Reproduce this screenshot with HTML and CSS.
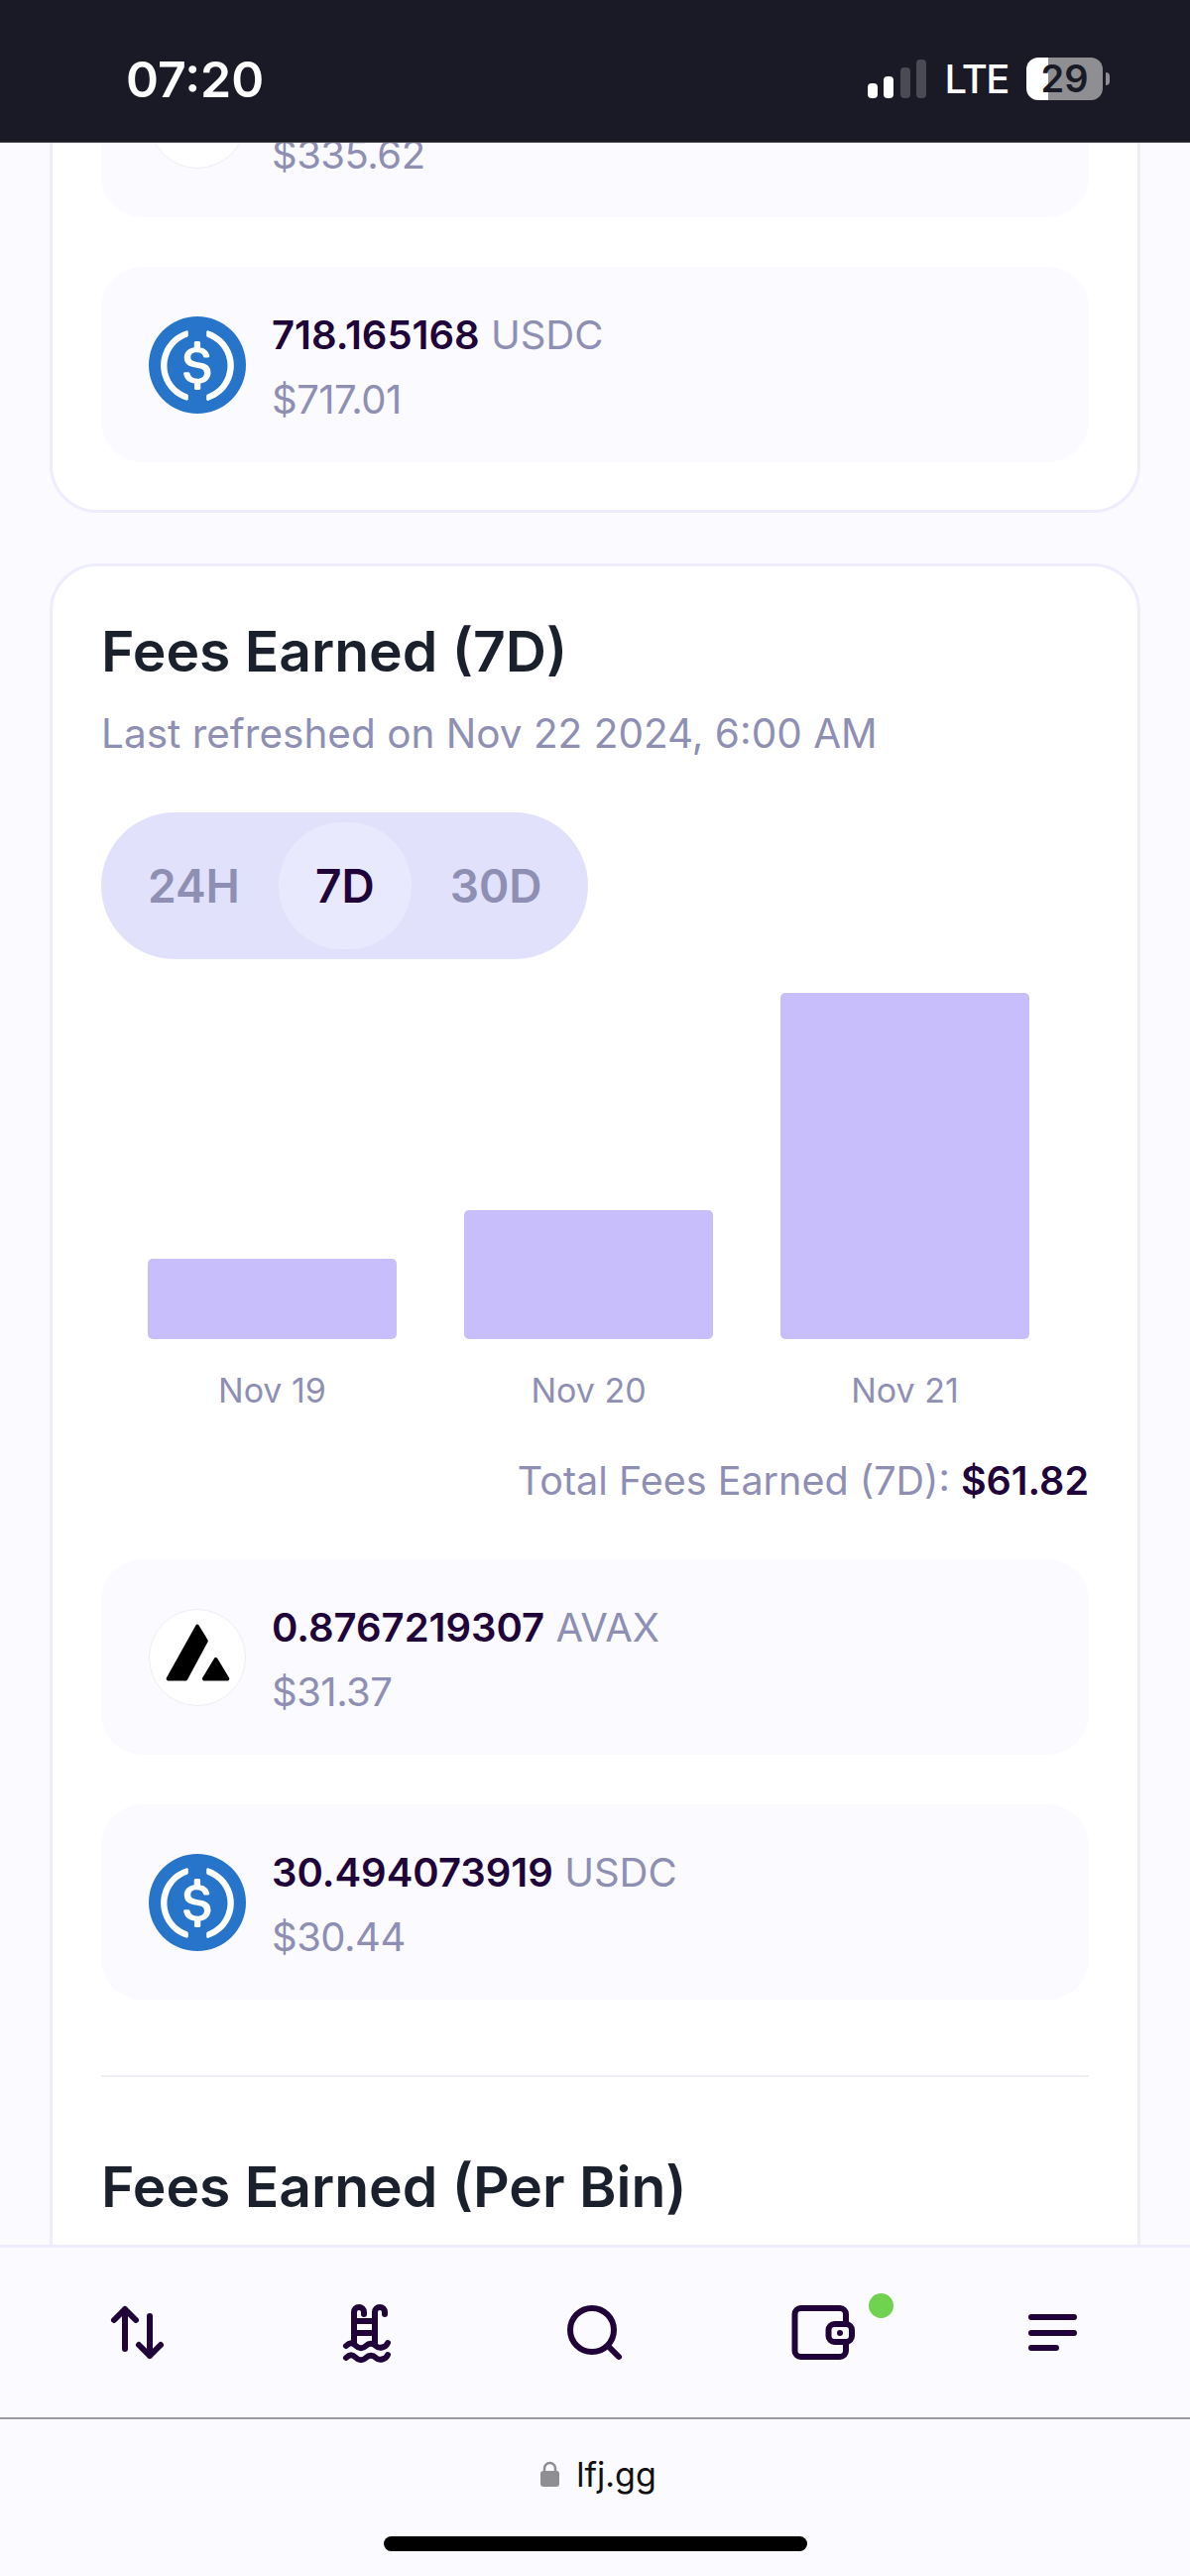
FILE: index.html
```html
<!DOCTYPE html>
<html lang="en">

<head>
    <meta charset="UTF-8" />
    <meta name="viewport" content="width=device-width, initial-scale=1.0" />
    <title>LFJ: Pool</title>
    <link rel="stylesheet" href="styles.css">
</head>

<body>
    <div class="status-bar">
        <span class="status-time">07:20</span>
        <div class="status-right">
            <svg class="signal" width="60" height="40" viewBox="0 0 60 40">
                <rect x="0" y="25" width="10" height="15" rx="4" fill="#fff" />
                <rect x="16" y="18" width="10" height="22" rx="4" fill="#fff" />
                <rect x="33" y="9" width="10" height="31" rx="4" fill="#4a4a55" />
                <rect x="49" y="1" width="10" height="39" rx="4" fill="#4a4a55" />
            </svg>
            <span class="status-lte">LTE</span>
            <div class="battery"><span>29</span></div>
            <div class="battery-nub"></div>
        </div>
    </div>

    <main class="content">
        <section class="card card-top">
            <div class="token-row">
                <div class="token-icon token-icon-plain"></div>
                <div class="token-text">
                    <div class="token-amount">&nbsp;</div>
                    <div class="token-value">$335.62</div>
                </div>
            </div>
            <div class="token-row">
                <svg class="token-icon" viewBox="0 0 2000 2000"><use href="#usdc" /></svg>
                <div class="token-text">
                    <div class="token-amount"><b>718.165168</b> USDC</div>
                    <div class="token-value">$717.01</div>
                </div>
            </div>
        </section>

        <section class="card card-fees">
            <h2 class="card-title">Fees Earned (7D)</h2>
            <p class="card-sub">Last refreshed on Nov 22 2024, 6:00 AM</p>

            <div class="range-toggle">
                <button class="range-btn">24H</button>
                <button class="range-btn range-btn-active">7D</button>
                <button class="range-btn">30D</button>
            </div>

            <div class="chart">
                <div class="chart-col">
                    <div class="chart-plot"><div class="chart-bar" style="height: 81px"></div></div>
                    <div class="chart-label">Nov 19</div>
                </div>
                <div class="chart-col">
                    <div class="chart-plot"><div class="chart-bar" style="height: 130px"></div></div>
                    <div class="chart-label">Nov 20</div>
                </div>
                <div class="chart-col">
                    <div class="chart-plot"><div class="chart-bar" style="height: 349px"></div></div>
                    <div class="chart-label">Nov 21</div>
                </div>
            </div>

            <div class="fees-total">Total Fees Earned (7D): <b>$61.82</b></div>

            <div class="token-list">
                <div class="token-row">
                    <svg class="token-icon token-icon-avax" viewBox="0 0 98 98">
                        <path d="M49 17 L58 32 L37 71 H19 Z" fill="#000" stroke="#000" stroke-width="4" stroke-linejoin="round" />
                        <path d="M68 51 L56 71 H80 Z" fill="#000" stroke="#000" stroke-width="4" stroke-linejoin="round" />
                    </svg>
                    <div class="token-text">
                        <div class="token-amount"><b>0.8767219307</b> AVAX</div>
                        <div class="token-value">$31.37</div>
                    </div>
                </div>
                <div class="token-row">
                    <svg class="token-icon" viewBox="0 0 2000 2000"><use href="#usdc" /></svg>
                    <div class="token-text">
                        <div class="token-amount"><b>30.494073919</b> USDC</div>
                        <div class="token-value">$30.44</div>
                    </div>
                </div>
            </div>

            <hr class="divider" />
            <h2 class="card-title card-title-bin">Fees Earned (Per Bin)</h2>
        </section>
    </main>

    <nav class="bottom-nav">
        <svg class="nav-icon" viewBox="0 0 72 72">
            <path d="M23 52V12M12 23L23 12L34 23M48 19V59M37 48L48 59L59 48" />
        </svg>
        <svg class="nav-icon" viewBox="0 0 72 72">
            <path d="M23 46V15a5 5 0 0 1 10 0v2M44 46V15a5 5 0 0 1 10 0v2M23 24H44M23 36H44" />
            <path d="M15 49c4-4 7-3 10 0s7 3 10 0 7-3 10 0 10 2 12-3M15 61c4-4 7-3 10 0s7 3 10 0 7-3 10 0 10 2 12-3" />
        </svg>
        <svg class="nav-icon" viewBox="0 0 72 72">
            <circle cx="33" cy="33" r="22" />
            <path d="M49 49L60 60" />
        </svg>
        <div class="nav-wallet">
            <svg class="nav-icon" viewBox="0 0 72 72">
                <path d="M58 26V17a6 6 0 0 0-6-6H12.500a6 6 0 0 0-6 6V54a6 6 0 0 0 6 6H52a6 6 0 0 0 6-6V45" />
                <rect x="40.500" y="27" width="23.500" height="18" rx="6" />
                <circle class="nav-dot" cx="52" cy="36" r="3" />
            </svg>
            <span class="wallet-badge"></span>
        </div>
        <svg class="nav-icon" viewBox="0 0 72 72">
            <path d="M15 20H58M15 36H58M15 51H40" />
        </svg>
    </nav>

    <div class="browser-bar">
        <div class="browser-url">
            <svg class="lock" width="19" height="26" viewBox="0 0 19 26">
                <path d="M4 11V7.500a5.500 5.500 0 0 1 11 0V11" fill="none" stroke="#8e8e93" stroke-width="2.500" />
                <rect x="0" y="10" width="19" height="16" rx="3" fill="#8e8e93" />
            </svg>
            <span>lfj.gg</span>
        </div>
        <div class="home-bar"></div>
    </div>

    <svg width="0" height="0" class="svg-defs">
        <g id="usdc">
            <circle cx="1000" cy="1000" r="1000" fill="#2775ca" />
            <path fill="#fff" d="M1275 1158.330c0-145.830-87.500-195.830-262.500-216.660-125-16.670-150-50-150-108.340s41.670-95.830 125-95.830c75 0 116.670 25 137.500 87.500 4.170 12.500 16.670 20.830 29.170 20.830h66.660c16.670 0 29.170-12.500 29.170-29.160v-4.170c-16.670-91.670-91.670-162.500-187.500-170.830v-100c0-16.670-12.500-29.170-33.330-33.340h-62.500c-16.670 0-29.170 12.500-33.340 33.340v95.830c-125 16.670-204.160 100-204.160 204.170 0 137.500 83.330 191.660 258.330 212.500 116.670 20.830 154.170 45.830 154.170 112.500s-58.340 112.500-137.500 112.500c-108.340 0-145.840-45.840-158.340-108.340-4.160-16.660-16.660-25-29.160-25h-70.840c-16.660 0-29.160 12.500-29.160 29.170v4.170c16.660 104.160 83.330 179.160 220.830 200v100c0 16.660 12.500 29.160 33.330 33.330h62.500c16.670 0 29.170-12.500 33.340-33.330v-100c125-20.840 208.330-108.340 208.330-220.840z" />
            <path fill="#fff" d="M787.500 1595.830c-325-116.660-491.670-479.160-370.830-800 62.500-175 200-308.330 370.830-370.830 16.670-8.330 25-20.830 25-41.670V325c0-16.670-8.330-29.170-25-33.330-4.170 0-12.500 0-16.670 4.160-395.830 125-612.500 545.840-487.500 941.670 75 233.330 254.170 412.500 487.500 487.500 16.670 8.330 33.340 0 37.500-16.670 4.170-4.160 4.170-8.330 4.170-16.660v-58.340c0-12.500-12.500-29.160-25-37.500zM1229.170 295.830c-16.670-8.330-33.340 0-37.500 16.670-4.170 4.170-4.170 8.330-4.170 16.670v58.330c0 16.670 12.500 33.330 25 41.670 325 116.660 491.670 479.160 370.830 800-62.500 175-200 308.330-370.830 370.830-16.670 8.330-25 20.830-25 41.670V1700c0 16.670 8.330 29.170 25 33.330 4.170 0 12.500 0 16.670-4.160 395.830-125 612.500-545.840 487.500-941.670-75-237.500-258.340-416.670-487.500-491.670z" />
        </g>
    </svg>
</body>

</html>
```

FILE: styles.css
```css
* {
    box-sizing: border-box;
}

html,
body {
    margin: 0;
    padding: 0;
    height: 2597px;
}

body {
    font-family: Inter, "Liberation Sans", sans-serif;
    background-color: #fafaff;
    color: #1a202c;
    display: flex;
    flex-direction: column;
    overflow: hidden;
}

.svg-defs {
    position: absolute;
}

/* phone status bar */
.status-bar {
    flex: 0 0 144px;
    background-color: #191a26;
    border-bottom: 1px solid #55555c;
    color: #fff;
    display: flex;
    align-items: center;
    justify-content: space-between;
    padding: 16px 81px 0 127px;
}

.status-time {
    font-size: 50px;
    font-weight: 600;
}

.status-right {
    display: flex;
    align-items: center;
}

.signal {
    margin-right: 17px;
    margin-top: -1px;
}

.status-lte {
    font-size: 40px;
    font-weight: 500;
    letter-spacing: -1.500px;
    margin-right: 18px;
}

.battery {
    width: 77px;
    height: 43px;
    border-radius: 12px;
    background: linear-gradient(to right, #fff 22px, #8e8e93 22px);
    color: #191a26;
    font-size: 38px;
    font-weight: 600;
    line-height: 43px;
    text-align: center;
}

.battery-nub {
    width: 4px;
    height: 13px;
    margin-left: 3px;
    border-radius: 0 4px 4px 0;
    background-color: #8e8e93;
}

/* scrolled content */
.content {
    flex: 1;
    min-height: 0;
    overflow: hidden;
    padding: 0 50px;
}

.card {
    background-color: #fff;
    border: 3px solid #ededfd;
    border-radius: 48px;
}

.card-top {
    margin-top: -173px;
    padding: 48px 49px;
    display: flex;
    flex-direction: column;
    gap: 50px;
}

.card-fees {
    margin-top: 51px;
    padding: 54px 49px 300px;
}

.card-title {
    margin: 0;
    font-size: 57px;
    font-weight: 600;
    line-height: 64px;
}

.card-sub {
    margin: 23px 0 0;
    font-size: 40.500px;
    line-height: 56px;
    color: #8f8fb3;
}

.range-toggle {
    display: inline-flex;
    margin-top: 51px;
    padding: 10px;
    gap: 2px;
    height: 148px;
    background-color: #e1e1fb;
    border-radius: 74px;
    vertical-align: top;
}

.range-btn {
    border: none;
    padding: 0 37px;
    border-radius: 65px;
    background: none;
    font-family: inherit;
    font-size: 46px;
    font-weight: 600;
    color: #8f8fb3;
}

.range-btn-active {
    background-color: #e9e9fd;
    color: #200339;
}

.chart {
    display: flex;
    gap: 68px;
    margin-top: 34px;
    padding: 0 60px 0 47px;
}

.chart-col {
    flex: 1;
}

.chart-plot {
    height: 349px;
    display: flex;
    align-items: flex-end;
}

.chart-bar {
    width: 100%;
    background-color: #c8befb;
    border-radius: 5px;
}

.chart-label {
    margin-top: 30px;
    font-size: 34px;
    line-height: 44px;
    text-align: center;
    color: #8f8fb3;
}

.fees-total {
    margin-top: 44px;
    font-size: 39.500px;
    line-height: 50px;
    text-align: right;
    color: #8f8fb3;
}

.fees-total b {
    font-weight: 600;
    color: #200339;
}

.token-list {
    display: flex;
    flex-direction: column;
    gap: 50px;
    margin-top: 54px;
}

.token-row {
    height: 197px;
    padding: 0 48px;
    display: flex;
    align-items: center;
    gap: 26px;
    background-color: #fafaff;
    border-radius: 42px;
}

.token-icon {
    flex: 0 0 98px;
    width: 98px;
    height: 98px;
}

.token-icon-plain,
.token-icon-avax {
    background-color: #fff;
    border: 1px solid #ededf3;
    border-radius: 50%;
}

.token-text {
    padding-top: 5px;
}

.token-amount,
.token-value {
    font-size: 40px;
    line-height: 65px;
    color: #8f8fb3;
}

.token-value {
    letter-spacing: -0.500px;
}

.token-amount b {
    font-weight: 600;
    color: #200339;
}

.divider {
    margin: 76px 0 0;
    border: none;
    border-top: 2px solid #eeeef4;
}

.card-title-bin {
    margin-top: 79px;
}

/* bottom tab bar */
.bottom-nav {
    flex: 0 0 174px;
    border-top: 3px solid #ededfd;
    background-color: #fafaff;
    display: flex;
    align-items: center;
    justify-content: space-between;
    padding: 0 103px 0 103px;
}

.nav-icon {
    width: 72px;
    height: 72px;
    display: block;
    fill: none;
    stroke: #200339;
    stroke-width: 6;
    stroke-linecap: round;
    stroke-linejoin: round;
}

.nav-dot {
    fill: #200339;
    stroke: none;
}

.nav-wallet {
    position: relative;
}

.wallet-badge {
    position: absolute;
    top: -4px;
    right: -34px;
    width: 25px;
    height: 25px;
    border-radius: 50%;
    background-color: #6fd34f;
}

/* browser url bar */
.browser-bar {
    flex: 0 0 160px;
    border-top: 2px solid #9b99a3;
    background-color: #fafaff;
    display: flex;
    flex-direction: column;
    align-items: center;
}

.browser-url {
    display: flex;
    align-items: center;
    gap: 17px;
    margin-top: 33px;
    margin-left: 7px;
    height: 44px;
    font-size: 34px;
    color: #111;
}

.home-bar {
    width: 427px;
    height: 15px;
    margin-top: 41px;
    border-radius: 8px;
    background-color: #000;
}
```
